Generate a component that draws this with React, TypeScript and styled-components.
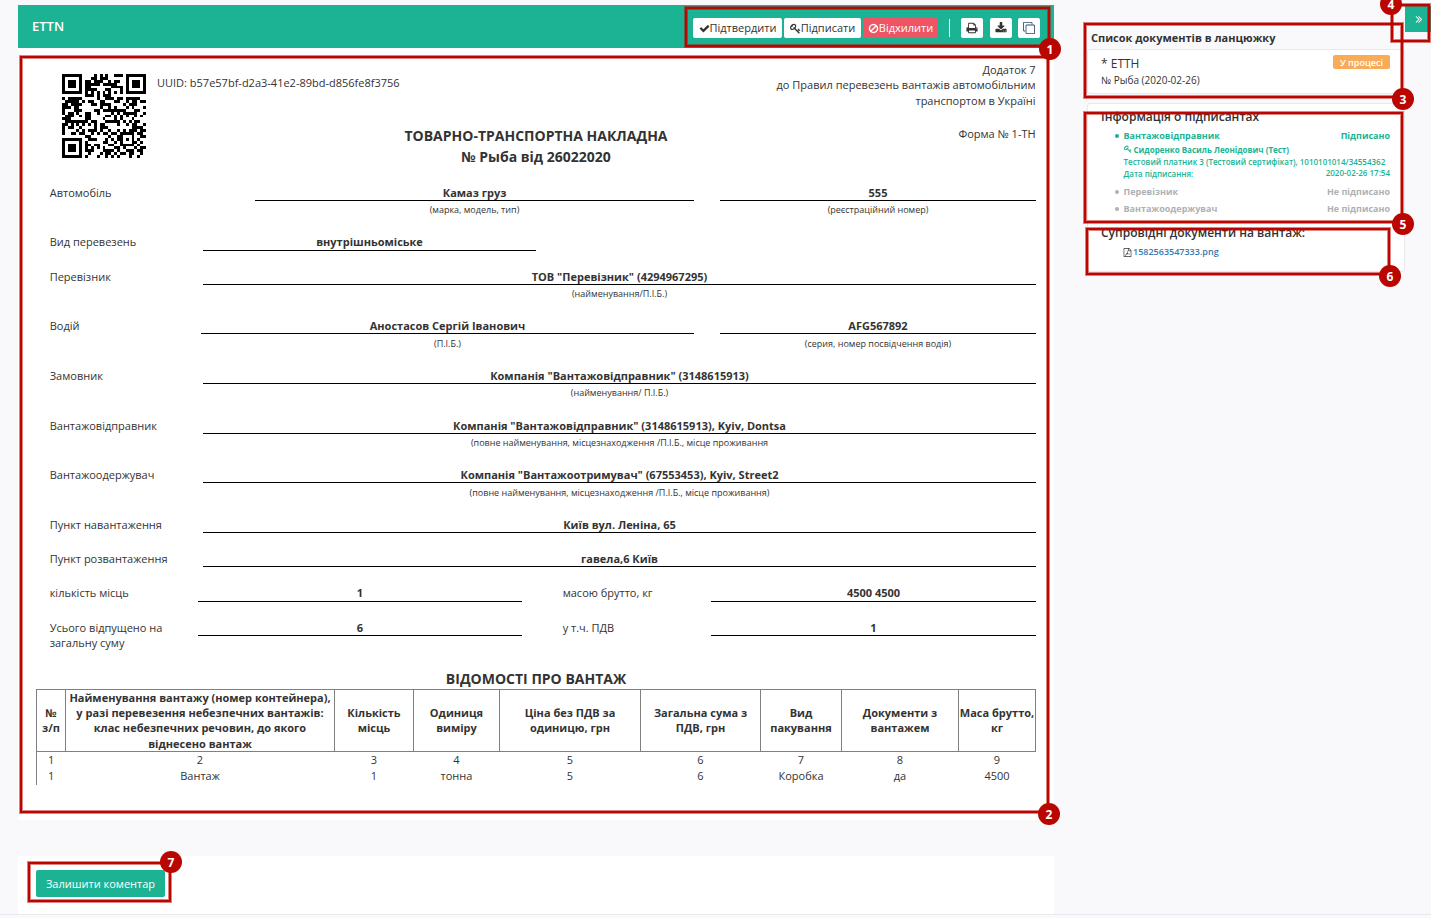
import React from "react";
import styled, { createGlobalStyle } from "styled-components";

const GlobalStyle = createGlobalStyle`
  * { box-sizing: border-box; }
  body {
    margin: 0;
    background: #f9f9fc;
    color: #333;
    font: 11px/16px "Open Sans", "Noto Sans", sans-serif;
  }
`;

/* ---------- QR code (version 3, level M, byte mode, single block) ---------- */

const QR_SIZE = 29;
const DATA_WORDS = 44;
const TOTAL_WORDS = 70;
const MASK = 2;

function gfMul(a: number, b: number): number {
  let r = 0;
  for (let i = 7; i >= 0; i--) {
    r = (r << 1) ^ ((r >>> 7) * 0x11d);
    r ^= ((b >>> i) & 1) * a;
  }
  return r;
}

function errorWords(data: number[], degree: number): number[] {
  const gen = new Array(degree).fill(0);
  gen[degree - 1] = 1;
  let root = 1;
  for (let i = 0; i < degree; i++) {
    for (let j = 0; j < degree; j++) {
      gen[j] = gfMul(gen[j], root);
      if (j + 1 < degree) gen[j] ^= gen[j + 1];
    }
    root = gfMul(root, 2);
  }
  const rem = new Array(degree).fill(0);
  for (const b of data) {
    const f = b ^ rem.shift();
    rem.push(0);
    gen.forEach((g, i) => { rem[i] ^= gfMul(g, f); });
  }
  return rem;
}

function encodeQr(text: string): boolean[][] {
  const bits: number[] = [];
  const put = (v: number, n: number) => { for (let i = n - 1; i >= 0; i--) bits.push((v >>> i) & 1); };
  put(4, 4);
  put(text.length, 8);
  for (const c of text) put(c.charCodeAt(0), 8);
  put(0, 4);
  const words: number[] = [];
  for (let i = 0; i < bits.length; i += 8) words.push(parseInt(bits.slice(i, i + 8).join(""), 2));
  for (let pad = 0xec; words.length < DATA_WORDS; pad ^= 0xec ^ 0x11) words.push(pad);
  const all = words.concat(errorWords(words, TOTAL_WORDS - DATA_WORDS));

  const m: boolean[][] = Array.from({ length: QR_SIZE }, () => new Array(QR_SIZE).fill(false));
  const fixed: boolean[][] = Array.from({ length: QR_SIZE }, () => new Array(QR_SIZE).fill(false));
  const set = (x: number, y: number, v: boolean) => {
    if (x < 0 || y < 0 || x >= QR_SIZE || y >= QR_SIZE) return;
    m[y][x] = v;
    fixed[y][x] = true;
  };
  for (let i = 0; i < QR_SIZE; i++) { set(6, i, i % 2 === 0); set(i, 6, i % 2 === 0); }
  for (const [cx, cy] of [[3, 3], [QR_SIZE - 4, 3], [3, QR_SIZE - 4]])
    for (let dy = -4; dy <= 4; dy++)
      for (let dx = -4; dx <= 4; dx++) {
        const d = Math.max(Math.abs(dx), Math.abs(dy));
        set(cx + dx, cy + dy, d !== 2 && d !== 4);
      }
  for (let dy = -2; dy <= 2; dy++)
    for (let dx = -2; dx <= 2; dx++) set(22 + dx, 22 + dy, Math.max(Math.abs(dx), Math.abs(dy)) !== 1);

  let rem = MASK;
  for (let i = 0; i < 10; i++) rem = (rem << 1) ^ ((rem >>> 9) * 0x537);
  const f = ((MASK << 10) | rem) ^ 0x5412;
  const bit = (i: number) => ((f >>> i) & 1) === 1;
  for (let i = 0; i <= 5; i++) set(8, i, bit(i));
  set(8, 7, bit(6));
  set(8, 8, bit(7));
  set(7, 8, bit(8));
  for (let i = 9; i < 15; i++) set(14 - i, 8, bit(i));
  for (let i = 0; i < 8; i++) set(QR_SIZE - 1 - i, 8, bit(i));
  for (let i = 8; i < 15; i++) set(8, QR_SIZE - 15 + i, bit(i));
  set(8, QR_SIZE - 8, true);

  let k = 0;
  for (let right = QR_SIZE - 1; right >= 1; right -= 2) {
    if (right === 6) right = 5;
    for (let v = 0; v < QR_SIZE; v++)
      for (let j = 0; j < 2; j++) {
        const x = right - j;
        const y = ((right + 1) & 2) === 0 ? QR_SIZE - 1 - v : v;
        if (fixed[y][x]) continue;
        const on = k < TOTAL_WORDS * 8 && ((all[k >>> 3] >>> (7 - (k & 7))) & 1) === 1;
        k++;
        m[y][x] = on !== (x % 3 === 0);
      }
  }
  return m;
}

const UUID = "b57e57bf-d2a3-41e2-89bd-d856fe8f3756";

const QrSvg = styled.svg`
  display: block;
  width: 84px;
  height: 84px;
`;

function QrCode() {
  let d = "";
  encodeQr(UUID).forEach((row, y) => row.forEach((on, x) => { if (on) d += `M${x} ${y}h1v1h-1z`; }));
  return (
    <QrSvg viewBox="0 0 29 29" shapeRendering="crispEdges" aria-hidden="true">
      <path d={d} fill="#000" />
    </QrSvg>
  );
}

/* ---------- icons ---------- */

const ICONS = {
  check: "M1671 566q0 40-28 68l-724 724-136 136q-28 28-68 28t-68-28l-136-136-362-362q-28-28-28-68t28-68l136-136q28-28 68-28t68 28l294 295 656-657q28-28 68-28t68 28l136 136q28 28 28 68z",
  ban: "M1440 893q0-161-87-295l-754 753q137 89 297 89 111 0 211.500-43.500t173.500-116.500 116-174.500 43-212.500zm-999 299l755-754q-135-91-300-91-148 0-273 73t-198 199-73 274q0 162 89 299zm1223-299q0 157-61 300t-163.500 246-245 164-298.500 61-298.500-61-245-164-163.500-246-61-300 61-299.500 163.500-245.500 245-164 298.500-61 298.500 61 245 164 163.500 245.500 61 299.500z",
  key: "M832 512q0-80-56-136t-136-56-136 56-56 136q0 42 19 83-41-19-83-19-80 0-136 56t-56 136 56 136 136 56 136-56 56-136q0-42-19-83 41 19 83 19 80 0 136-56t56-136zm851 704q0 17-49 66t-66 49q-9 0-28.500-16t-36.500-33-38.500-40-24.500-26l-96 96 220 220q28 28 28 68 0 42-39 81t-81 39q-40 0-68-28l-671-671q-176 131-365 131-163 0-265.500-102.500t-102.500-265.500q0-160 95-313t248-248 313-95q163 0 265.500 102.500t102.500 265.500q0 189-131 365l355 355 96-96q-3-3-26-24.500t-40-38.500-33-36.500-16-28.500q0-17 49-66t66-49q13 0 23 10 6 6 46 44.500t82 79.500 86.500 86 73 78 28.500 41z",
  print: "M448 1536h896v-256h-896v256zm0-640h896v-384h-160q-40 0-68-28t-28-68v-160h-640v640zm1152 64q0-26-19-45t-45-19-45 19-19 45 19 45 45 19 45-19 19-45zm128 0v416q0 13-9.500 22.500t-22.500 9.500h-224v160q0 40-28 68t-68 28h-960q-40 0-68-28t-28-68v-160h-224q-13 0-22.500-9.500t-9.500-22.500v-416q0-79 56.500-135.500t135.500-56.500h64v-544q0-40 28-68t68-28h672q40 0 88 20t76 48l152 152q28 28 48 76t20 88v256h64q79 0 135.500 56.500t56.500 135.500z",
  download: "M1344 1344q0-26-19-45t-45-19-45 19-19 45 19 45 45 19 45-19 19-45zm256 0q0-26-19-45t-45-19-45 19-19 45 19 45 45 19 45-19 19-45zm128-224v320q0 40-28 68t-68 28h-1472q-40 0-68-28t-28-68v-320q0-40 28-68t68-28h465l135 136q58 56 136 56t136-56l136-136h464q40 0 68 28t28 68zm-325-569q17 41-14 70l-448 448q-18 19-45 19t-45-19l-448-448q-31-29-14-70 17-39 59-39h256v-448q0-26 19-45t45-19h256q26 0 45 19t19 45v448h256q42 0 59 39z",
  clone: "M1664 1632v-1088q0-13-9.500-22.500t-22.500-9.500h-1088q-13 0-22.500 9.500t-9.500 22.500v1088q0 13 9.500 22.500t22.500 9.500h1088q13 0 22.500-9.500t9.500-22.500zm128-1088v1088q0 66-47 113t-113 47h-1088q-66 0-113-47t-47-113v-1088q0-66 47-113t113-47h1088q66 0 113 47t47 113zm-384-384v160h-128v-160q0-13-9.500-22.500t-22.500-9.500h-1088q-13 0-22.500 9.500t-9.500 22.500v1088q0 13 9.500 22.500t22.500 9.500h160v128h-160q-66 0-113-47t-47-113v-1088q0-66 47-113t113-47h1088q66 0 113 47t47 113z",
  chevrons: "M979 960q0 13-10 23l-466 466q-10 10-23 10t-23-10l-50-50q-10-10-10-23t10-23l393-393-393-393q-10-10-10-23t10-23l50-50q10-10 23-10t23 10l466 466q10 10 10 23zm384 0q0 13-10 23l-466 466q-10 10-23 10t-23-10l-50-50q-10-10-10-23t10-23l393-393-393-393q-10-10-10-23t10-23l50-50q10-10 23-10t23 10l466 466q10 10 10 23z",
  pdf: "M1596 380q28 28 48 76t20 88v1152q0 40-28 68t-68 28h-1344q-40 0-68-28t-28-68v-1600q0-40 28-68t68-28h896q40 0 88 20t76 48zm-444-244v376h376q-10-29-22-41l-313-313q-12-12-41-22zm384 1528v-1024h-416q-40 0-68-28t-28-68v-416h-768v1536h1280zm-514-593q33 26 84 56 59-7 117-7 147 0 177 49 16 22 2 52 0 1-1 2l-2 2v1q-6 38-71 38-48 0-115-20t-130-53q-221 24-392 83-153 262-242 262-15 0-28-7l-24-12q-1-1-6-5-10-10-6-36 9-40 56-91.500t132-96.500q14-9 23 6 2 2 2 4 52-85 107-197 68-136 104-262-24-82-30.500-159.500t6.500-127.500q11-40 42-40h22q23 0 35 15 18 21 9 68-2 6-4 8 1 3 1 8v30q-2 123-14 192 55 164 146 238z",
};

const Glyph = styled.svg<{ $size: number }>`
  width: ${(p) => p.$size}px;
  height: ${(p) => p.$size}px;
  flex: none;
  fill: currentColor;
`;

function Icon({ name, size = 12 }: { name: keyof typeof ICONS; size?: number }) {
  return (
    <Glyph $size={size} viewBox="0 0 1792 1792" aria-hidden="true">
      <path d={ICONS[name]} />
    </Glyph>
  );
}

/* ---------- page frame ---------- */

const Page = styled.div`
  position: relative;
  display: flex;
  width: 1431px;
  height: 918px;
  padding: 5px 0 0 18px;
  overflow: hidden;
`;

const Main = styled.main`
  display: flex;
  flex-direction: column;
  width: 1036px;
  height: 909px;
`;

const Footline = styled.div`
  position: absolute;
  left: 0;
  right: 0;
  top: 914px;
  height: 1px;
  background: #e7eaec;
`;

const TopBar = styled.header`
  display: flex;
  align-items: center;
  height: 43px;
  padding: 0 14px;
  background: #1bb394;
  color: #fff;
`;

const TopTitle = styled.h1`
  margin: 0 auto 2px 0;
  font-size: 13px;
  font-weight: 600;
`;

const ToolButton = styled.button<{ $width: number; $danger?: boolean }>`
  display: flex;
  align-items: center;
  justify-content: center;
  width: ${(p) => p.$width}px;
  height: 20px;
  margin: 3px 2px 0 0;
  padding: 0;
  border: 0;
  border-radius: 2px;
  background: ${(p) => (p.$danger ? "#ed5565" : "#fff")};
  color: ${(p) => (p.$danger ? "#fff" : "#333")};
  font: 11px/18px "Open Sans", "Noto Sans", sans-serif;
`;

const Divider = styled.span`
  width: 1px;
  height: 18px;
  margin: 3px 11px 0 9px;
  background: #fff;
`;

const IconButton = styled(ToolButton)<{ $tint?: string }>`
  margin-right: 0;
  color: ${(p) => p.$tint ?? "#333"};
  & + & { margin-left: 6.5px; }
`;

/* ---------- document ---------- */

const Sheet = styled.section`
  display: flex;
  flex-direction: column;
  height: 772px;
  padding: 14px 18px 0;
  background: #fff;
`;

const DocHead = styled.div`
  display: grid;
  grid-template-columns: 121px 1fr 270px;
  height: 64px;
  padding: 0 0 0 26px;
`;

const QrCell = styled.div`
  padding-top: 12px;
`;

const UuidText = styled.div`
  margin-left: -26px;
  padding-top: 13px;
`;

const Appendix = styled.div`
  margin-top: -0.3px;
  padding-right: 0.4px;
  line-height: 15.6px;
  text-align: right;
  white-space: pre-line;
`;

const TitleRow = styled.div`
  display: grid;
  grid-template-columns: 200px 1fr 200px;
  height: 59px;
`;

const DocTitle = styled.h2`
  grid-column: 2;
  margin: -1px 0 0;
  font-size: 14px;
  line-height: 21px;
  font-weight: 700;
  text-align: center;
  white-space: pre-line;
`;

const FormName = styled.div`
  padding-right: 0.4px;
  text-align: right;
`;

const FormRow = styled.div<{ $cols: string; $height: number }>`
  display: grid;
  grid-template-columns: ${(p) => p.$cols};
  align-items: start;
  height: ${(p) => p.$height}px;
`;

const Label = styled.div<{ $inset: number; $raised?: boolean }>`
  margin-top: ${(p) => (p.$raised ? -1 : 0)}px;
  padding-left: ${(p) => p.$inset}px;
  line-height: 15px;
  white-space: pre-line;
`;

const Field = styled.div`
  text-align: center;
`;

const Value = styled.div<{ $raised?: boolean }>`
  height: ${(p) => (p.$raised ? 17 : 16)}px;
  margin-top: ${(p) => (p.$raised ? -1 : 0)}px;
  border-bottom: 1px solid #000;
  font-weight: 700;
  line-height: 15px;
`;

const Caption = styled.div<{ $gap: number }>`
  padding-top: ${(p) => p.$gap}px;
  font-size: 9px;
  line-height: 12px;
`;

const CargoTitle = styled.h3`
  margin: 0;
  height: 20px;
  font-size: 14px;
  line-height: 20px;
  text-align: center;
`;

const CargoTable = styled.table`
  width: 999px;
  table-layout: fixed;
  border-collapse: collapse;
  text-align: center;
`;

const HeadCell = styled.th<{ $tall?: boolean }>`
  height: 61px;
  padding: 0;
  border: 1px solid #808080;
  font-weight: 700;
  line-height: ${(p) => (p.$tall ? 15.2 : 15)}px;
  white-space: pre;
`;

const BodyCell = styled.td<{ $last?: boolean }>`
  height: ${(p) => (p.$last ? 17 : 16)}px;
  padding: 0;
  line-height: 16px;
  vertical-align: top;
  &:first-child { border-left: 1px solid #808080; }
`;

const Comments = styled.section`
  flex: 1;
  margin-top: 36px;
  padding: 14px 18px;
  background: #fff;
`;

const CommentButton = styled.button`
  width: 129px;
  height: 27px;
  padding: 0;
  border: 0;
  border-radius: 2px;
  background: #1bb394;
  color: #fff;
  font: 11px/25px "Open Sans", "Noto Sans", sans-serif;
`;

type Cell = { value: string; caption?: string; label?: string; gap?: number };
type RowSpec = { label: string; cols: string; height: number; raised?: boolean; cells: (Cell | null)[] };

const WIDE = "167px 833px";
const HALVES = "162px 324px 189px 325px";
const ROWS: RowSpec[] = [
  { label: "Автомобіль", cols: "219px 439px 26px 316px", height: 50, cells: [{ value: "Камаз груз", caption: "(марка, модель, тип)" }, null, { value: "555", caption: "(реєстраційний номер)" }] },
  { label: "Вид перевезень", cols: "167px 333px", height: 34, raised: true, cells: [{ value: "внутрішньоміське" }] },
  { label: "Перевізник", cols: WIDE, height: 49, cells: [{ value: "ТОВ \"Перевізник\" (4294967295)", caption: "(найменування/П.І.Б.)" }] },
  { label: "Водій", cols: "165px 493px 26px 316px", height: 50, cells: [{ value: "Аностасов Сергій Іванович", caption: "(П.І.Б.)", gap: 4 }, null, { value: "AFG567892", caption: "(серия, номер посвідчення водія)", gap: 4 }] },
  { label: "Замовник", cols: WIDE, height: 50, cells: [{ value: "Компанія \"Вантажовідправник\" (3148615913)", caption: "(найменування/ П.І.Б.)" }] },
  { label: "Вантажовідправник", cols: WIDE, height: 49, cells: [{ value: "Компанія \"Вантажовідправник\" (3148615913), Kyiv, Dontsa", caption: "(повне найменування, місцезнаходження /П.І.Б., місце проживання" }] },
  { label: "Вантажоодержувач", cols: WIDE, height: 50, cells: [{ value: "Компанія \"Вантажоотримувач\" (67553453), Kyiv, Street2", caption: "(повне найменування, місцезнаходження /П.І.Б., місце проживання)", gap: 4 }] },
  { label: "Пункт навантаження", cols: WIDE, height: 34, cells: [{ value: "Київ вул. Леніна, 65" }] },
  { label: "Пункт розвантаження", cols: WIDE, height: 35, cells: [{ value: "гавела,6 Київ" }] },
  { label: "кількість місць", cols: HALVES, height: 34, raised: true, cells: [{ value: "1" }, { value: "", label: "масою брутто, кг" }, { value: "4500 4500" }] },
  { label: "Усього відпущено на\nзагальну суму", cols: HALVES, height: 49, cells: [{ value: "6" }, { value: "", label: "у т.ч. ПДВ" }, { value: "1" }] },
];

const COLUMNS: [number, string, string][] = [
  [29, "№\nз/п", "1"],
  [269, "Найменування вантажу (номер контейнера),\nу разі перевезення небезпечних вантажів:\nклас небезпечних речовин, до якого\nвіднесено вантаж", "Вантаж"],
  [79, "Кількість\nмісць", "1"],
  [86, "Одиниця\nвиміру", "тонна"],
  [141, "Ціна без ПДВ за\nодиницю, грн", "5"],
  [120, "Загальна сума з\nПДВ, грн", "6"],
  [81, "Вид\nпакування", "Коробка"],
  [117, "Документи з\nвантажем", "да"],
  [77, "Маса брутто,\nкг", "4500"],
];

function Waybill() {
  return (
    <Sheet>
      <DocHead>
        <QrCell><QrCode /></QrCell>
        <UuidText>UUID: {UUID}</UuidText>
        <Appendix>{"Додаток 7\nдо Правил перевезень вантажів автомобільним\nтранспортом в Україні"}</Appendix>
      </DocHead>
      <TitleRow>
        <DocTitle>{"ТОВАРНО-ТРАНСПОРТНА НАКЛАДНА\n№ Рыба від 26022020"}</DocTitle>
        <FormName>Форма № 1-ТН</FormName>
      </TitleRow>
      {ROWS.map((row) => (
        <FormRow key={row.label} $cols={row.cols} $height={row.height}>
          <Label $inset={13.7} $raised={row.raised}>{row.label}</Label>
          {row.cells.map((cell, i) =>
            cell === null ? <span key={i} /> : cell.label ? (
              <Label key={i} $inset={40.7} $raised={row.raised}>{cell.label}</Label>
            ) : (
              <Field key={i}>
                <Value $raised={row.raised}>{cell.value}</Value>
                {cell.caption && <Caption $gap={cell.gap ?? 3}>{cell.caption}</Caption>}
              </Field>
            )
          )}
        </FormRow>
      ))}
      <CargoTitle>ВІДОМОСТІ ПРО ВАНТАЖ</CargoTitle>
      <CargoTable>
        <colgroup>{COLUMNS.map(([w], i) => <col key={i} width={w} />)}</colgroup>
        <thead><tr>{COLUMNS.map(([, title], i) => <HeadCell key={i} $tall={i === 1}>{title}</HeadCell>)}</tr></thead>
        <tbody>
          <tr>{COLUMNS.map((_, i) => <BodyCell key={i}>{i + 1}</BodyCell>)}</tr>
          <tr>{COLUMNS.map(([, , v], i) => <BodyCell key={i} $last>{v}</BodyCell>)}</tr>
        </tbody>
      </CargoTable>
    </Sheet>
  );
}

/* ---------- side column ---------- */

const Side = styled.aside`
  display: grid;
  grid-template-columns: 318px 26px;
  align-items: start;
  margin-left: 33px;
`;

const SideBody = styled.div`
  padding-top: 24px;
`;

const Toggle = styled.button`
  display: flex;
  align-items: center;
  justify-content: center;
  height: 26px;
  margin-top: 1px;
  padding: 0 0 0 1px;
  border: 0;
  background: #1bb394;
  color: #fff;
`;

const SideTitle = styled.h4`
  margin: 0 0 3px 4px;
  font-size: 11px;
  line-height: 17px;
  font-weight: 700;
`;

const Card = styled.div<{ $height: number }>`
  height: ${(p) => p.$height}px;
  margin-bottom: 9px;
  padding: 0 14px 0 13px;
  border: 1px solid #e7eaec;
  border-radius: 3px;
  background: #fff;
`;

const ChainItem = styled.div`
  display: flex;
  justify-content: space-between;
  padding-top: 5px;
`;

const ChainName = styled.div`
  font-size: 12px;
  line-height: 18px;
`;

const ChainNumber = styled.div`
  font-size: 10px;
  line-height: 14px;
`;

const Badge = styled.span`
  width: 57px;
  height: 14px;
  border-radius: 2px;
  background: #f8ac59;
  color: #fff;
  font-size: 9px;
  font-weight: 600;
  line-height: 15px;
  text-align: center;
`;

const SectionTitle = styled.h5`
  margin: 0;
  font-size: 12px;
  line-height: 18px;
  font-weight: 600;
`;

const SignerSection = styled.div`
  height: 120px;
  padding-top: 4px;
`;

const Signer = styled.div<{ $signed?: boolean }>`
  display: grid;
  grid-template-columns: 1fr auto;
  position: relative;
  margin: 4px 0 ${(p) => (p.$signed ? 6 : 5)}px;
  padding-left: 22.5px;
  color: ${(p) => (p.$signed ? "#1ab394" : "#aeb1b4")};
  font-size: 9px;
  line-height: 12.5px;
  font-weight: 700;
  &::before {
    content: "";
    position: absolute;
    left: 14px;
    top: 4px;
    width: 4px;
    height: 4px;
    border-radius: 50%;
    background: currentColor;
  }
`;

const SignerLine = styled.div<{ $bold?: boolean }>`
  display: flex;
  grid-column: 1 / -1;
  justify-content: space-between;
  font-size: 8px;
  line-height: 12px;
  font-weight: ${(p) => (p.$bold ? 700 : 600)};
  white-space: nowrap;
`;

const SignerName = styled.span`
  display: flex;
  align-items: center;
  gap: 2px;
  line-height: 13px;
`;

const SignedAt = styled.span`
  line-height: 10.5px;
`;

const FileLink = styled.a`
  display: flex;
  align-items: center;
  gap: 1px;
  padding: 3px 0 0 22px;
  color: #337ab7;
  font-size: 9px;
  font-weight: 600;
  line-height: 14px;
  svg { color: #333; }
`;

function SidePanel() {
  return (
    <Side>
      <SideBody>
        <SideTitle>Список документів в ланцюжку</SideTitle>
        <Card $height={45}>
          <ChainItem>
            <div>
              <ChainName>* ETTH</ChainName>
              <ChainNumber>№ Рыба (2020-02-26)</ChainNumber>
            </div>
            <Badge>У процесі</Badge>
          </ChainItem>
        </Card>
        <Card $height={169}>
          <SignerSection>
            <SectionTitle>Інформація о підписантах</SectionTitle>
            <Signer $signed>
              <span>Вантажовідправник</span>
              <span>Підписано</span>
              <SignerLine $bold><SignerName><Icon name="key" size={8} />Сидоренко Василь Леонідович (Тест)</SignerName></SignerLine>
              <SignerLine>Тестовий платник 3 (Тестовий сертифікат), 1010101014/34554362</SignerLine>
              <SignerLine><span>Дата підписання:</span><SignedAt>2020-02-26 17:54</SignedAt></SignerLine>
            </Signer>
            <Signer><span>Перевізник</span><span>Не підписано</span></Signer>
            <Signer><span>Вантажоодержувач</span><span>Не підписано</span></Signer>
          </SignerSection>
          <SectionTitle>Супровідні документи на вантаж:</SectionTitle>
          <FileLink><Icon name="pdf" size={9} />1582563547333.png</FileLink>
        </Card>
      </SideBody>
      <Toggle><Icon name="chevrons" size={12} /></Toggle>
    </Side>
  );
}

/* ---------- numbered callouts drawn over the page ---------- */

const Frame = styled.div<{ $x: number; $y: number; $w: number; $h: number }>`
  position: absolute;
  left: ${(p) => p.$x}px;
  top: ${(p) => p.$y}px;
  width: ${(p) => p.$w}px;
  height: ${(p) => p.$h}px;
  border: 2px solid #ba0600;
  box-shadow: 0 0 0 1px rgba(186, 6, 0, 0.5), inset 0 0 0 1px rgba(186, 6, 0, 0.5);
  pointer-events: none;
`;

const Marker = styled.span<{ $x: number; $y: number }>`
  position: absolute;
  left: ${(p) => p.$x - 11}px;
  top: ${(p) => p.$y - 11}px;
  width: 22px;
  height: 22px;
  border-radius: 50%;
  background: #ba0600;
  color: #fff;
  font-size: 12px;
  font-weight: 700;
  line-height: 24px;
  text-align: center;
`;

const CALLOUTS = [
  { frame: [685, 7, 365, 40], marker: [1050, 49] },
  { frame: [20, 56, 1029, 757], marker: [1049, 814] },
  { frame: [1084, 23, 319, 75], marker: [1403, 99] },
  { frame: [1391, 4, 39, 38], marker: [1391, 4] },
  { frame: [1084, 112, 319, 111], marker: [1403, 224] },
  { frame: [1086, 228, 304, 47], marker: [1390, 276] },
  { frame: [28, 862, 143, 40], marker: [171, 862] },
];

export default function App() {
  return (
    <Page>
      <GlobalStyle />
      <Main>
        <TopBar>
          <TopTitle>ETTN</TopTitle>
          <ToolButton $width={89}><Icon name="check" size={11} />Підтвердити</ToolButton>
          <ToolButton $width={77}><Icon name="key" size={11} />Підписати</ToolButton>
          <ToolButton $width={75} $danger><Icon name="ban" size={11} />Відхилити</ToolButton>
          <Divider />
          <IconButton $width={22}><Icon name="print" /></IconButton>
          <IconButton $width={22}><Icon name="download" /></IconButton>
          <IconButton $width={22} $tint="#2f4b73"><Icon name="clone" size={12} /></IconButton>
        </TopBar>
        <Waybill />
        <Comments><CommentButton>Залишити коментар</CommentButton></Comments>
      </Main>
      <SidePanel />
      <Footline />
      {CALLOUTS.map(({ frame: [x, y, w, h] }, i) => <Frame key={i} $x={x} $y={y} $w={w} $h={h} />)}
      {CALLOUTS.map(({ marker: [x, y] }, i) => <Marker key={i} $x={x} $y={y}>{i + 1}</Marker>)}
    </Page>
  );
}
